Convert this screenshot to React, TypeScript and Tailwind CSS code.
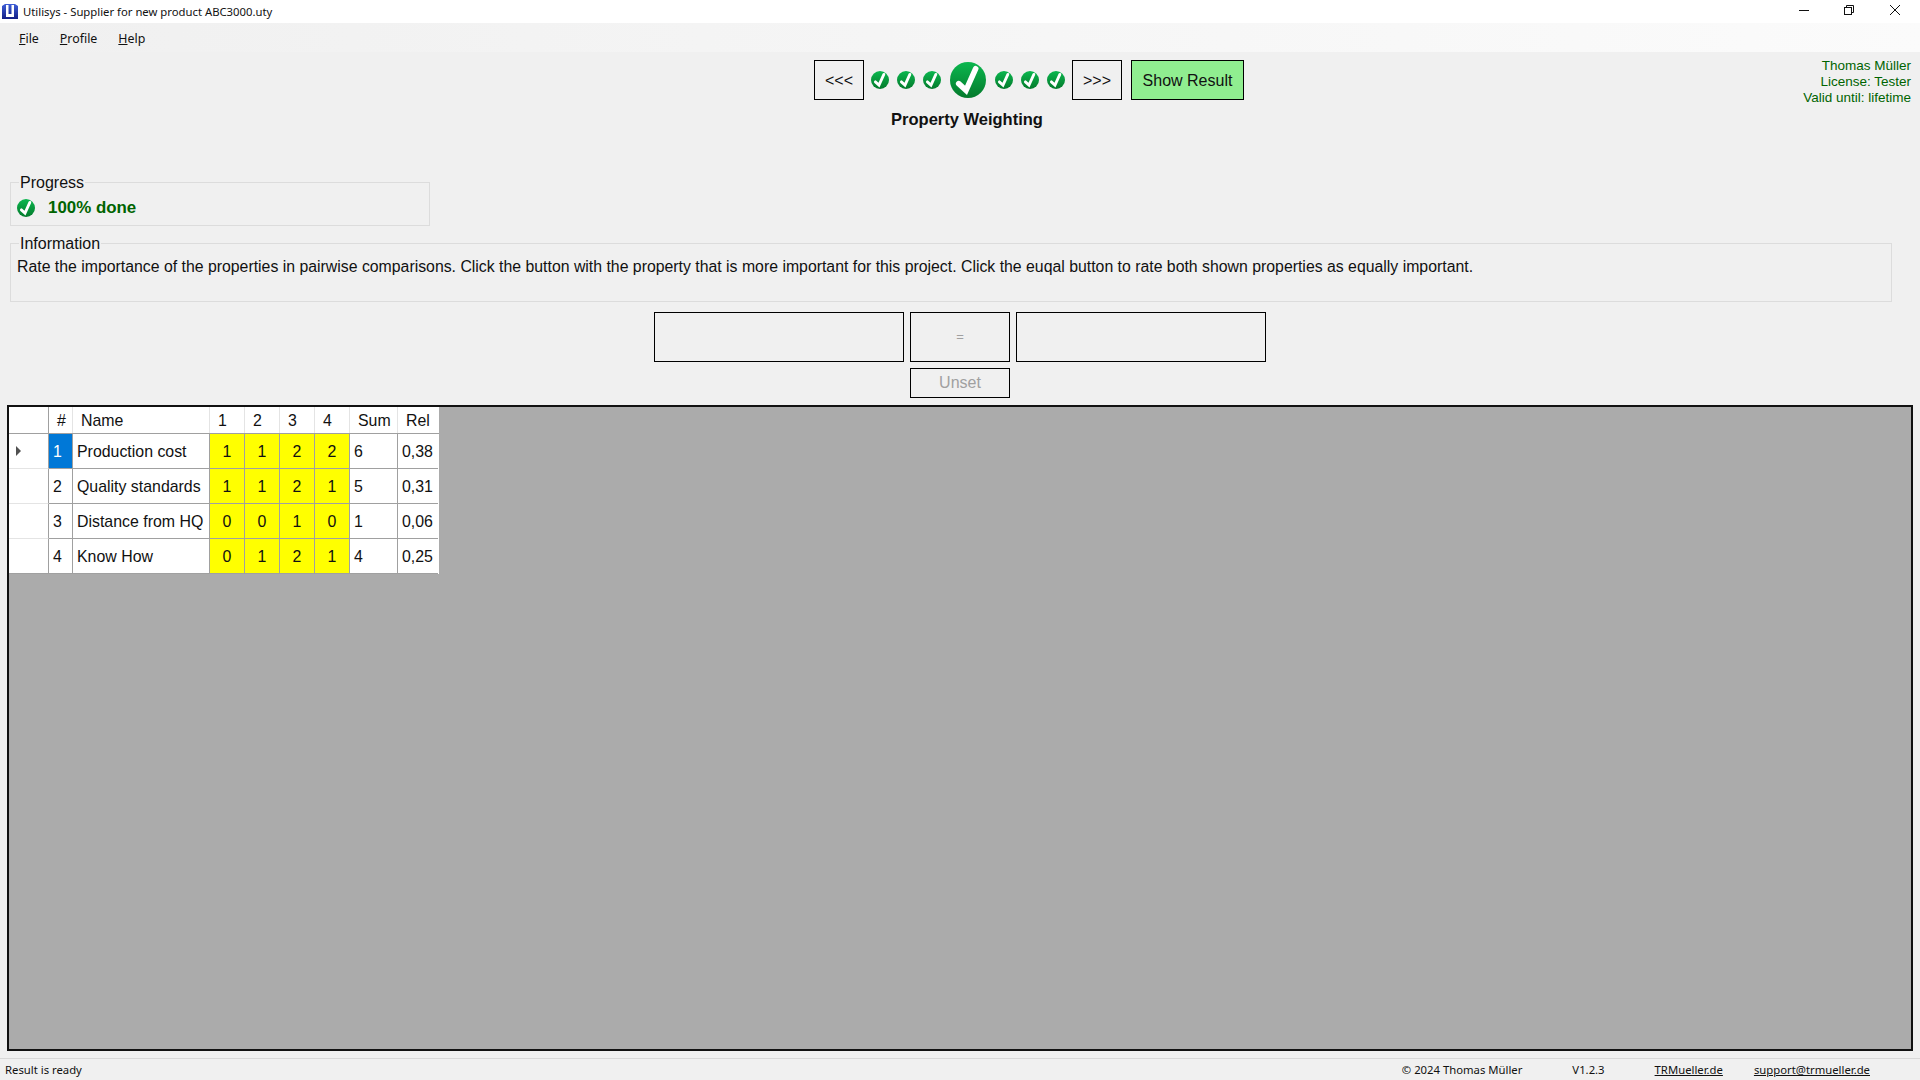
import React from "react";

const ui = "font-['Noto_Sans','Open_Sans',sans-serif]";

function Check({ size, id }: { size: number; id: string }) {
  return (
    <svg width={size} height={size} viewBox="0 0 36 36" className="block shrink-0">
      <defs>
        <linearGradient id={id} x1="0" y1="0" x2="0" y2="1">
          <stop offset="0" stopColor="#0bb74f" />
          <stop offset="1" stopColor="#047a2c" />
        </linearGradient>
      </defs>
      <circle cx="18" cy="18" r="18" fill={`url(#${id})`} />
      <path d="M8.7 21.7 L16 28.3 L25.7 6.7" fill="none" stroke="#fff" strokeWidth="5.6" strokeLinecap="round" strokeLinejoin="miter" />
    </svg>
  );
}

function NavButton({ label, className = "" }: { label: string; className?: string }) {
  return (
    <div className={`h-10 pt-[1px] flex items-center justify-center border border-black text-[16px] ${className}`}>{label}</div>
  );
}

function Group({ title, className, children }: { title: string; className: string; children: React.ReactNode }) {
  return (
    <fieldset className={`border border-[#dcdcdc] ${className}`}>
      <legend className="ml-[2px] px-[1px] text-[16px] leading-[18px] text-[#111] translate-y-[1px]">{title}</legend>
      {children}
    </fieldset>
  );
}

const rows = [
  { n: "1", name: "Production cost", v: ["1", "1", "2", "2"], sum: "6", rel: "0,38" },
  { n: "2", name: "Quality standards", v: ["1", "1", "2", "1"], sum: "5", rel: "0,31" },
  { n: "3", name: "Distance from HQ", v: ["0", "0", "1", "0"], sum: "1", rel: "0,06" },
  { n: "4", name: "Know How", v: ["0", "1", "2", "1"], sum: "4", rel: "0,25" },
];

function Grid() {
  return (
    <div className="w-[430px] text-[15.9px] text-[#111] bg-white">
      <div className="flex h-[27px] border-b border-[#a0a0a0]">
        <div className="w-[40px] border-r border-[#a0a0a0]" />
        <div className="w-[24px] border-r border-[#e4e4e4] pl-[8px] leading-[27px]">#</div>
        <div className="w-[137px] border-r border-[#e4e4e4] pl-[8px] leading-[27px]">Name</div>
        {["1", "2", "3", "4"].map((h) => (
          <div key={h} className="w-[35px] border-r border-[#e4e4e4] pl-[8px] leading-[27px]">{h}</div>
        ))}
        <div className="w-[48px] border-r border-[#e4e4e4] pl-[8px] leading-[27px]">Sum</div>
        <div className="w-[40px] pl-[8px] leading-[27px]">Rel</div>
      </div>
      {rows.map((r, i) => (
        <div key={r.n} className="flex h-[35px]">
          <div className={`w-[40px] flex items-center pl-[7px] border-r border-[#a0a0a0] ${i === 3 ? "border-b border-b-[#a0a0a0]" : "border-b border-b-[#e4e4e4]"}`}>
            {i === 0 && <div className="w-0 h-0 border-y-[5px] border-y-transparent border-l-[5px] border-l-[#505050]" />}
          </div>
          <div className={`w-[24px] flex items-center pl-[4px] pt-[1px] border-r border-b border-[#a0a0a0] ${i === 0 ? "bg-[#0078d7] text-white" : ""}`}>{r.n}</div>
          <div className="w-[137px] flex items-center pl-[4px] pt-[1px] border-r border-b border-[#a0a0a0] whitespace-nowrap">{r.name}</div>
          {r.v.map((v, j) => (
            <div key={j} className="w-[35px] flex items-center justify-center pt-[1px] bg-[#ffff00] border-r border-b border-[#a0a0a0]">{v}</div>
          ))}
          <div className="w-[48px] flex items-center pl-[4px] pt-[1px] border-r border-b border-[#a0a0a0]">{r.sum}</div>
          <div className="w-[40px] flex items-center pl-[4px] pt-[1px] border-b border-[#a0a0a0] whitespace-nowrap">{r.rel}</div>
        </div>
      ))}
    </div>
  );
}

export default function App() {
  return (
    <div className="w-[1920px] h-[1080px] overflow-hidden flex flex-col bg-[#f0f0f0] text-[#111] font-['Liberation_Sans',Arial,sans-serif]">
      {/* Title bar */}
      <div className={`h-[23px] bg-white flex items-center pt-[1px] text-[11.3px] text-[#111] ${ui}`}>
        <svg width="16" height="17" viewBox="0 0 16 17" className="ml-[2px] mr-[5px] -mt-[1px] shrink-0">
          <defs>
            <linearGradient id="ico" x1="0" y1="0" x2="0" y2="1">
              <stop offset="0" stopColor="#3f5fd8" />
              <stop offset="1" stopColor="#141f86" />
            </linearGradient>
          </defs>
          <path d="M0 3l3-2h10l3 2v13H0z" fill="url(#ico)" />
          <path d="M4 2h2.5v9h3V2H12v12H4z" fill="#fff" />
        </svg>
        <span>Utilisys - Supplier for new product ABC3000.uty</span>
        <div className="ml-auto flex items-center mr-[3px] mb-[4px]">
          <svg width="45" height="20" viewBox="0 0 45 20"><path d="M18 10.5h10" stroke="#111" strokeWidth="1" /></svg>
          <svg width="45" height="20" viewBox="0 0 45 20" fill="none" stroke="#111" className="ml-[1px]"><rect x="17.5" y="7.5" width="7" height="7" /><path d="M19.5 7.5V5.5h7v7h-2" /></svg>
          <svg width="45" height="20" viewBox="0 0 45 20" fill="none" stroke="#111"><path d="M18 5l10 10M28 5L18 15" /></svg>
        </div>
      </div>
      {/* Menu */}
      <div className={`h-[29px] bg-gradient-to-r from-[#f0f0f0] to-[#fbfbfb] flex items-center pl-[19px] pt-[3px] text-[12.4px] ${ui}`}>
        <span><u>F</u>ile</span>
        <span className="ml-[21px]"><u>P</u>rofile</span>
        <span className="ml-[21px]"><u>H</u>elp</span>
      </div>
      {/* Wizard header */}
      <div className="h-[130px] flex shrink-0">
        <div className="w-[814px] shrink-0" />
        <div className="w-[430px] pt-[8px] shrink-0">
          <div className="flex items-center">
            <NavButton label="<<<" className="w-[50px]" />
            <div className="flex items-center ml-[7px] gap-[8px]">
              <Check size={18} id="a1" /><Check size={18} id="a2" /><Check size={18} id="a3" />
            </div>
            <div className="ml-[9px] mr-[9px]"><Check size={36} id="a4" /></div>
            <div className="flex items-center gap-[8px]">
              <Check size={18} id="a5" /><Check size={18} id="a6" /><Check size={18} id="a7" />
            </div>
            <NavButton label=">>>" className="w-[50px] ml-[7px]" />
            <NavButton label="Show Result" className="w-[113px] ml-[9px] bg-[#90ee90]" />
          </div>
          <div className="w-[306px] text-center font-bold text-[16.5px] leading-[18px] mt-[10px] text-[#111]">Property Weighting</div>
        </div>
        <div className="flex-1 pt-[6px] pr-[9px] text-right text-[13.5px] leading-[16px] text-[#006400]">
          <div>Thomas Müller</div>
          <div>License: Tester</div>
          <div>Valid until: lifetime</div>
        </div>
      </div>
      {/* Groups */}
      <div className="pl-[10px] pr-[28px] flex flex-col gap-[7px] shrink-0">
        <Group title="Progress" className="w-[420px] h-[53px] pl-[6px] -mt-[9px]">
          <div className="flex items-center h-[30px] mt-[2px]">
            <Check size={18} id="a8" />
            <span className="ml-[13px] font-bold text-[16.9px] text-[#006400]">100% done</span>
          </div>
        </Group>
        <Group title="Information" className="h-[68px] pl-[6px] mt-[1px]">
          <div className="leading-[18px] text-[15.84px] whitespace-nowrap mt-[6px] text-[#111]">
            Rate the importance of the properties in pairwise comparisons. Click the button with the property that is more important for this project. Click the euqal button to rate both shown properties as equally important.
          </div>
        </Group>
      </div>
      {/* Comparison */}
      <div className="flex flex-col items-center shrink-0 mt-[10px]">
        <div className="flex gap-[6px]">
          <div className="w-[250px] h-[50px] border border-black" />
          <div className="w-[100px] h-[50px] border border-black flex items-center justify-center text-[13px] text-[#a0a0a0]">=</div>
          <div className="w-[250px] h-[50px] border border-black" />
        </div>
        <div className="w-[100px] h-[30px] mt-[6px] border border-black flex items-center justify-center text-[16px] text-[#a0a0a0]">Unset</div>
      </div>
      {/* Grid panel */}
      <div className="mx-[7px] mt-[7px] h-[646px] shrink-0 border-2 border-[#111] bg-[#ababab]">
        <Grid />
      </div>
      {/* Status bar */}
      <div className={`mt-[7px] flex-1 border-t border-[#d8d8d8] flex items-center pl-[5px] pt-[1px] text-[11.3px] ${ui}`}>
        <span>Result is ready</span>
        <div className="ml-auto flex items-center pr-[50px]">
          <span>© 2024 Thomas Müller</span>
          <span className="ml-[50px]">V1.2.3</span>
          <span className="ml-[50px] underline">TRMueller.de</span>
          <span className="ml-[31px] underline">support@trmueller.de</span>
        </div>
      </div>
    </div>
  );
}
